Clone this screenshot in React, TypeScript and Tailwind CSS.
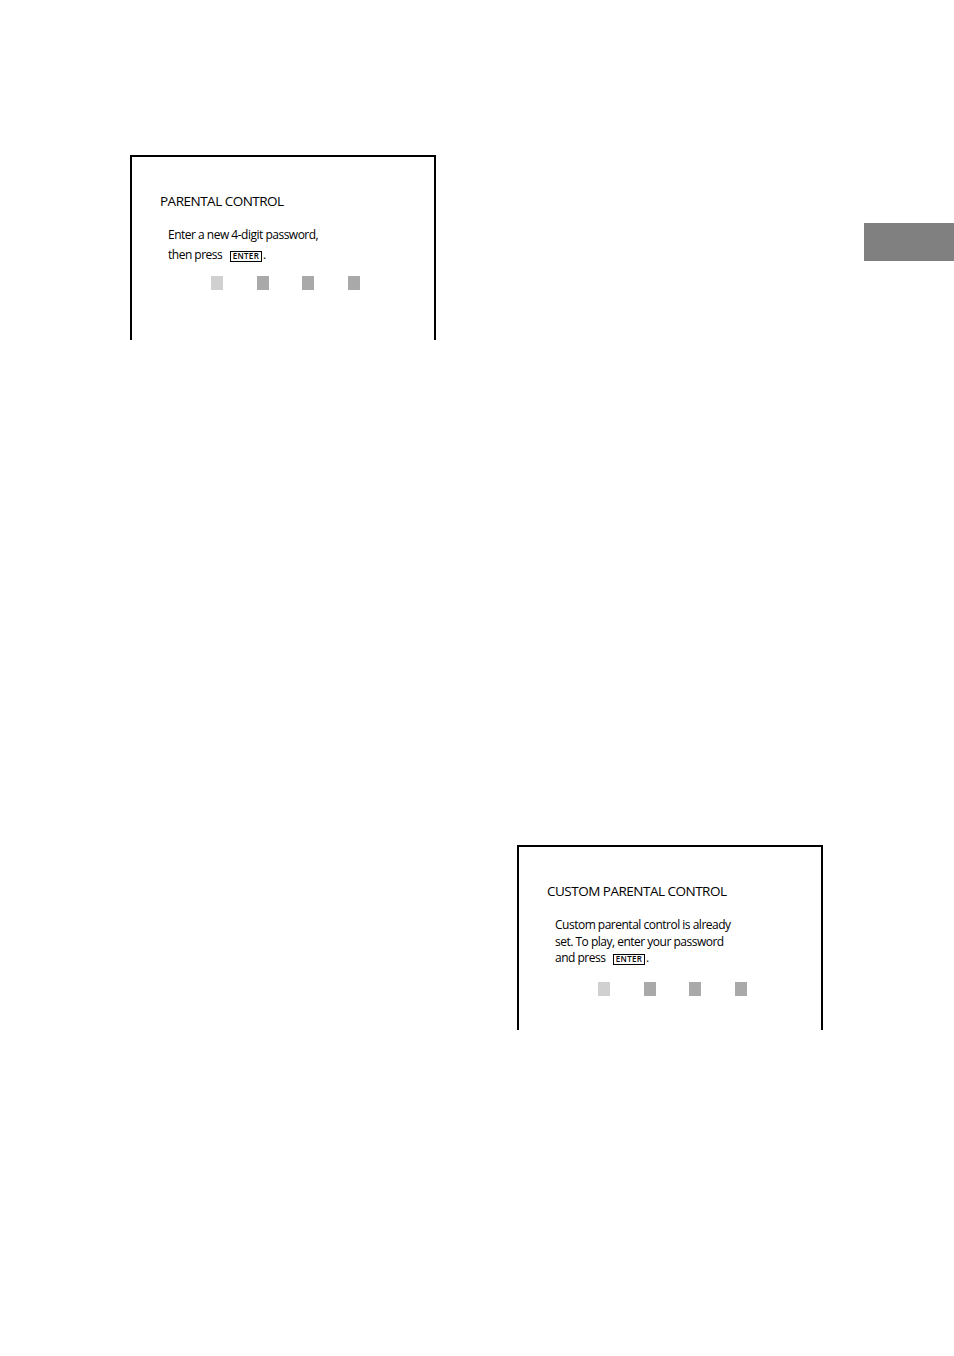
import React from "react";

const font = { fontFamily: '"Open Sans", "Noto Sans", sans-serif' };

function EnterKey() {
  return (
    <span className="inline-flex items-center justify-center border border-black h-[11px] w-[32px] text-[8px] leading-none font-semibold tracking-[0.3px] align-[0px] ml-[5px] mr-[1px]">
      ENTER
    </span>
  );
}

function Squares() {
  return (
    <div className="flex gap-[33.5px] pl-[79px]">
      <div className="w-[12px] h-[14px] bg-[#d0d0d0]" />
      <div className="w-[12px] h-[14px] bg-[#a9a9a9]" />
      <div className="w-[12px] h-[14px] bg-[#a9a9a9]" />
      <div className="w-[12px] h-[14px] bg-[#a9a9a9]" />
    </div>
  );
}

export default function App() {
  return (
    <div className="w-[954px] h-[1356px] bg-white text-black" style={font}>
      <div className="flex justify-between pt-[155px]">
        <div className="ml-[130px] w-[306px] h-[185px] border-2 border-b-0 border-black">
          <div className="pl-[28px] pt-[35px] text-[13.5px] leading-[18px] tracking-[-0.5px]">PARENTAL CONTROL</div>
          <div className="pl-[36px] mt-[15px] text-[12px] leading-[20px] tracking-[-0.5px]">
            <div>Enter a new 4-digit password,</div>
            <div>
              then press <EnterKey />.
            </div>
          </div>
          <div className="mt-[11px]">
            <Squares />
          </div>
        </div>
        <div className="mt-[68px] w-[90px] h-[38px] bg-[#808080]" />
      </div>
      <div className="mt-[505px] ml-[517px] w-[306px] h-[185px] border-2 border-b-0 border-black">
        <div className="pl-[28px] pt-[35px] text-[13.5px] leading-[18px] tracking-[-0.5px]">CUSTOM PARENTAL CONTROL</div>
        <div className="pl-[36px] mt-[17px] text-[12px] leading-[16.5px] tracking-[-0.5px]">
          <div>Custom parental control is already</div>
          <div>set. To play, enter your password</div>
          <div>
            and press <EnterKey />.
          </div>
        </div>
        <div className="mt-[15.5px]">
          <Squares />
        </div>
      </div>
    </div>
  );
}
